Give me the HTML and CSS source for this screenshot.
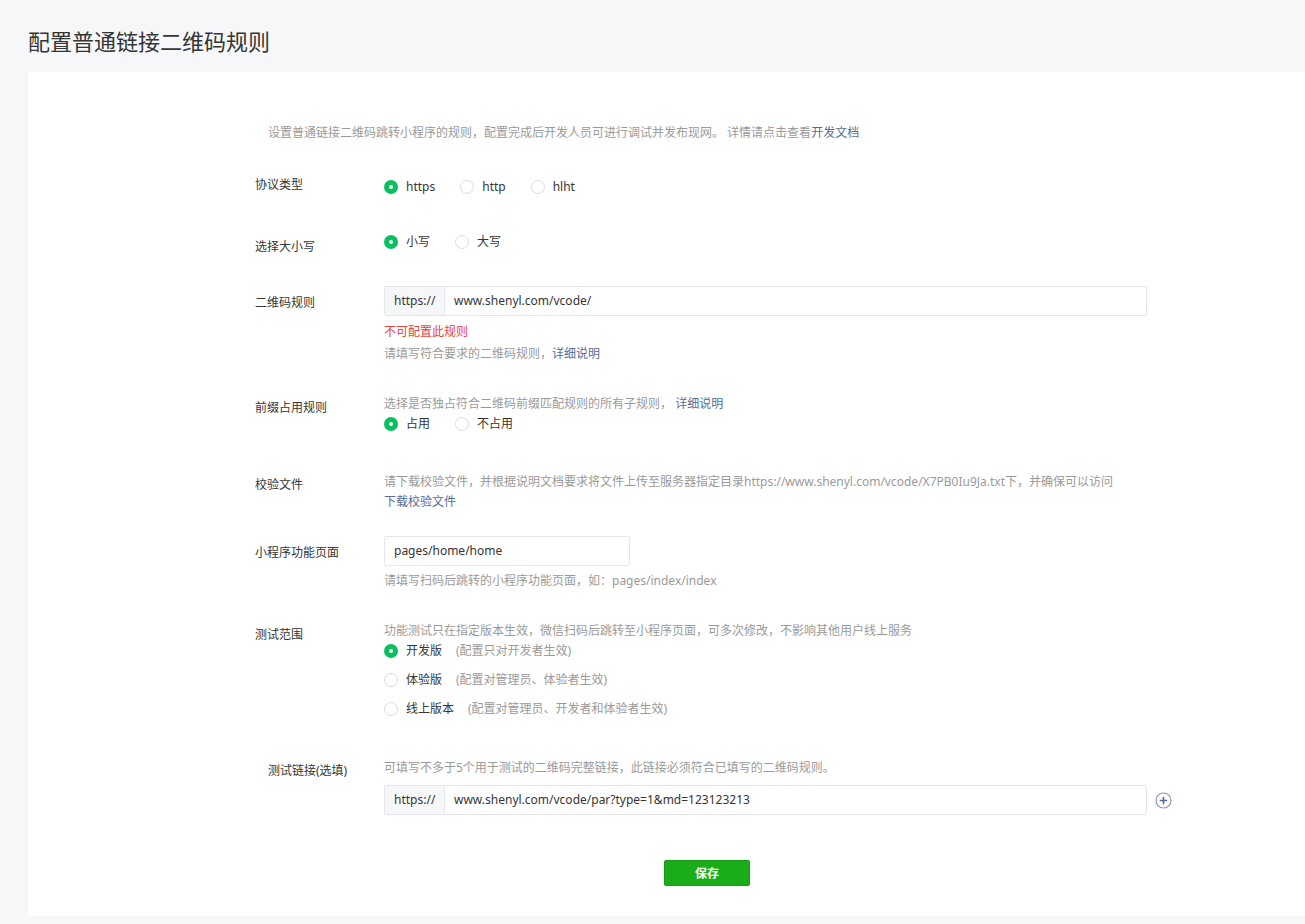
FILE: index.html
```html
<!DOCTYPE html>
<html lang="zh-CN">
<head>
  <meta charset="UTF-8" />
  <meta name="viewport" content="width=device-width, initial-scale=1.0"/>
  <title>配置普通链接二维码规则</title>
  <link rel="stylesheet" href="styles.css">
</head>
<body>
  <div class="page">
    <h2 class="page-title">配置普通链接二维码规则</h2>

    <div class="card">
      <p class="intro">设置普通链接二维码跳转小程序的规则，配置完成后开发人员可进行调试并发布现网。 详情请点击查看<a href="#">开发文档</a></p>

      <div class="form">
        <div class="form-item item-protocol">
          <label class="form-label">协议类型</label>
          <div class="form-ctrl">
            <div class="radio-group">
              <span class="radio checked"><i></i>https</span>
              <span class="radio"><i></i>http</span>
              <span class="radio"><i></i>hlht</span>
            </div>
          </div>
        </div>

        <div class="form-item item-case">
          <label class="form-label pad5">选择大小写</label>
          <div class="form-ctrl">
            <div class="radio-group">
              <span class="radio checked"><i></i>小写</span>
              <span class="radio"><i></i>大写</span>
            </div>
          </div>
        </div>

        <div class="form-item">
          <label class="form-label pad7">二维码规则</label>
          <div class="form-ctrl">
            <div class="input-box wide">
              <span class="input-prefix">https://</span>
              <span class="input-text">www.shenyl.com/vcode/</span>
            </div>
            <p class="error">不可配置此规则</p>
            <p class="tips">请填写符合要求的二维码规则，<a href="#">详细说明</a></p>
          </div>
        </div>

        <div class="form-item">
          <label class="form-label pad4">前缀占用规则</label>
          <div class="form-ctrl">
            <p class="tips">选择是否独占符合二维码前缀匹配规则的所有子规则， <a href="#">详细说明</a></p>
            <div class="radio-group">
              <span class="radio checked"><i></i>占用</span>
              <span class="radio"><i></i>不占用</span>
            </div>
          </div>
        </div>

        <div class="form-item item-file">
          <label class="form-label pad3">校验文件</label>
          <div class="form-ctrl">
            <p class="tips">请下载校验文件，并根据说明文档要求将文件上传至服务器指定目录https://www.shenyl.com/vcode/X7PB0Iu9Ja.txt下，并确保可以访问</p>
            <p class="tips"><a href="#">下载校验文件</a></p>
          </div>
        </div>

        <div class="form-item item-page">
          <label class="form-label pad7">小程序功能页面</label>
          <div class="form-ctrl">
            <div class="input-box short">
              <span class="input-text">pages/home/home</span>
            </div>
            <p class="tips hint-below">请填写扫码后跳转的小程序功能页面，如：pages/index/index</p>
          </div>
        </div>

        <div class="form-item item-scope">
          <label class="form-label pad4">测试范围</label>
          <div class="form-ctrl">
            <p class="tips">功能测试只在指定版本生效，微信扫码后跳转至小程序页面，可多次修改，不影响其他用户线上服务</p>
            <div class="radio-list">
              <span class="radio checked"><i></i>开发版<em>(配置只对开发者生效)</em></span>
              <span class="radio"><i></i>体验版<em>(配置对管理员、体验者生效)</em></span>
              <span class="radio"><i></i>线上版本<em>(配置对管理员、开发者和体验者生效)</em></span>
            </div>
          </div>
        </div>

        <div class="form-item item-links">
          <label class="form-label pad3 indent">测试链接(选填)</label>
          <div class="form-ctrl">
            <p class="tips">可填写不多于5个用于测试的二维码完整链接，此链接必须符合已填写的二维码规则。</p>
            <div class="link-row">
              <div class="input-box wide">
                <span class="input-prefix">https://</span>
                <span class="input-text">www.shenyl.com/vcode/par?type=1&amp;md=123123213</span>
              </div>
              <svg class="add-icon" width="17" height="17" viewBox="0 0 17 17">
                <circle cx="8.5" cy="8.5" r="7.5" fill="none" stroke="#8d96b0" stroke-width="1.2"/>
                <path d="M8.5 4.8v7.4M4.8 8.5h7.4" stroke="#576b95" stroke-width="1.6"/>
              </svg>
            </div>
          </div>
        </div>

        <div class="form-actions">
          <button class="btn-save">保存</button>
        </div>
      </div>
    </div>
  </div>
</body>
</html>
```

FILE: styles.css
```css
* {
  margin: 0;
  padding: 0;
  box-sizing: border-box;
}

body {
  background: #f6f7f9;
  font-family: "Noto Sans", "Noto Sans CJK SC", sans-serif;
  font-size: 12px;
  color: #353535;
}

a {
  color: #576b95;
  text-decoration: none;
}

.page {
  padding: 0 0 10px 28px;
  min-height: 924px;
}

.page-title {
  padding-top: 26px;
  margin-bottom: 16px;
  font-size: 22px;
  line-height: 30px;
  font-weight: normal;
  color: #353535;
}

.card {
  background: #fff;
  padding: 51px 0 30px 227px;
}

.intro {
  padding-left: 13px;
  line-height: 20px;
  color: #9a9a9a;
}

.form {
  width: 904px;
}

.form-item {
  display: flex;
  align-items: flex-start;
  margin-top: 29px;
}

.item-protocol {
  margin-top: 32px;
}

.item-case {
  margin-top: 35px;
}

.item-file {
  margin-top: 38px;
}

.item-page {
  margin-top: 24px;
}

.item-scope {
  margin-top: 30px;
}

.item-links {
  margin-top: 39px;
}

.form-label {
  width: 129px;
  flex-shrink: 0;
  line-height: 20px;
  color: #353535;
}

.form-label.indent {
  padding-left: 13px;
}

.pad3 { padding-top: 3px; }
.pad4 { padding-top: 4px; }
.pad5 { padding-top: 5px; }
.pad7 { padding-top: 7px; }

.form-ctrl {
  flex: 1;
}

.item-protocol .radio-group {
  margin-top: 2px;
}

.radio-group {
  display: flex;
}

.radio {
  display: inline-flex;
  align-items: center;
  line-height: 20px;
  margin-right: 25px;
  color: #353535;
}

.radio i {
  width: 14px;
  height: 14px;
  border: 1px solid #dcdcdc;
  border-radius: 50%;
  margin-right: 8px;
  background: #fff;
}

.radio.checked i {
  border: 5px solid #07c160;
  background: #fff;
}

.radio em {
  font-style: normal;
  color: #9a9a9a;
  margin-left: 14px;
}

.radio-list {
  display: flex;
  flex-direction: column;
  align-items: flex-start;
}

.radio-list .radio + .radio {
  margin-top: 9px;
}

.input-box {
  display: flex;
  height: 30px;
  border: 1px solid #e4e6eb;
  border-radius: 2px;
  background: #fff;
  align-items: stretch;
}

.input-box.wide {
  width: 763px;
}

.input-box.short {
  width: 246px;
}

.input-prefix {
  width: 60px;
  padding: 0 9px;
  background: #f6f7f9;
  border-right: 1px solid #e4e6eb;
  line-height: 28px;
  color: #353535;
}

.input-text {
  padding: 0 9px;
  line-height: 28px;
  color: #353535;
}

.error {
  margin-top: 5px;
  line-height: 22px;
  color: #e64340;
}

.tips {
  line-height: 20px;
  color: #9a9a9a;
}

.error + .tips {
  line-height: 22px;
}

.hint-below {
  margin-top: 5px;
}

.link-row {
  display: flex;
  align-items: center;
  margin-top: 7px;
}

.add-icon {
  margin-left: 8px;
}

.form-actions {
  margin-top: 45px;
  text-align: center;
}

.btn-save {
  width: 86px;
  height: 26px;
  border: 1px solid #179b16;
  border-radius: 2px;
  background: #1aad19;
  color: #fff;
  font-family: inherit;
  font-size: 12px;
  font-weight: bold;
  cursor: pointer;
}
```
